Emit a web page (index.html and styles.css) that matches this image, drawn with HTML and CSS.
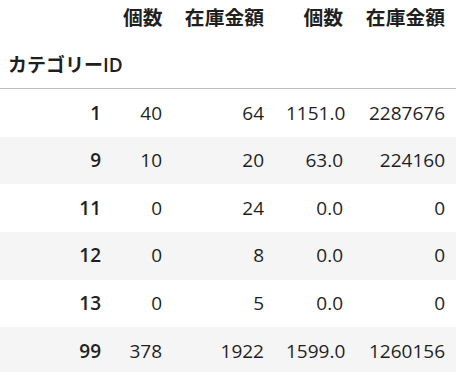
FILE: index.html
```html
<!DOCTYPE html>
<html lang="ja">
<head>
<meta charset="utf-8">
<link rel="stylesheet" href="styles.css">
</head>
<body>
<table class="df">
  <colgroup>
    <col class="c-idx"><col class="c-a"><col class="c-b"><col class="c-c"><col class="c-d">
  </colgroup>
  <thead>
    <tr class="h1">
      <th></th><th>個数</th><th>在庫金額</th><th>個数</th><th>在庫金額</th>
    </tr>
    <tr class="h2">
      <th class="idxname">カテゴリーID</th><th></th><th></th><th></th><th></th>
    </tr>
  </thead>
  <tbody>
    <tr><th>1</th><td>40</td><td>64</td><td>1151.0</td><td>2287676</td></tr>
    <tr><th>9</th><td>10</td><td>20</td><td>63.0</td><td>224160</td></tr>
    <tr><th>11</th><td>0</td><td>24</td><td>0.0</td><td>0</td></tr>
    <tr><th>12</th><td>0</td><td>8</td><td>0.0</td><td>0</td></tr>
    <tr><th>13</th><td>0</td><td>5</td><td>0.0</td><td>0</td></tr>
    <tr><th>99</th><td>378</td><td>1922</td><td>1599.0</td><td>1260156</td></tr>
  </tbody>
</table>
</body>
</html>
```

FILE: styles.css
```css
html, body {
  margin: 0;
  padding: 0;
  background: #ffffff;
}

.df {
  border-collapse: collapse;
  table-layout: fixed;
  width: 456px;
  font-family: "Open Sans", "Noto Sans CJK JP", sans-serif;
  font-size: 19px;
  line-height: 26.6px;
  color: #1f1f1f;
}

.c-idx { width: 112px; }
.c-a { width: 61px; }
.c-b { width: 102px; }
.c-c { width: 79px; }
.c-d { width: 102px; }

.df th,
.df td {
  padding: 10.5px 11px;
  text-align: right;
  white-space: nowrap;
  overflow: visible;
}

.df th {
  font-weight: 600;
}

.df thead th {
  font-size: 19.8px;
  font-weight: 700;
}

.df thead .h1 th {
  padding-top: 5px;
  padding-bottom: 10px;
}

.df thead .h2 th {
  padding-top: 10px;
  padding-bottom: 10px;
  border-bottom: 1px solid #bdbdbd;
}

.df thead .h2 .idxname {
  text-align: left;
  padding-left: 8px;
  font-size: 19px;
  font-weight: 600;
}

.df tbody td {
  font-weight: 400;
}

.df tbody tr:nth-child(even) {
  background: #f5f5f5;
}
```
